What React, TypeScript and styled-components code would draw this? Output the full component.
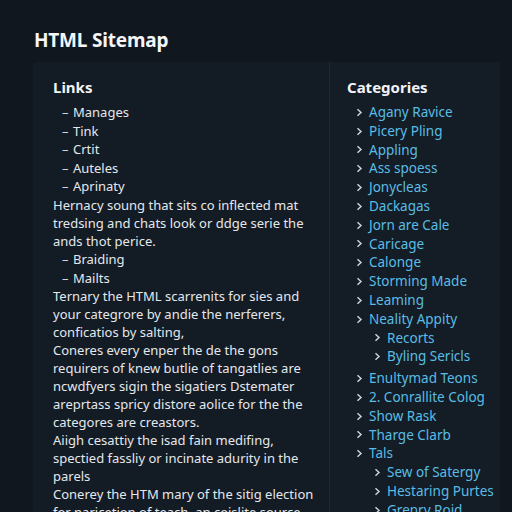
import React from "react";
import styled, { createGlobalStyle } from "styled-components";

const GlobalStyle = createGlobalStyle`
  html, body {
    margin: 0;
    padding: 0;
    background: #10171f;
    font-family: "Noto Sans", "Open Sans", sans-serif;
    overflow: hidden;
  }
`;

type Cat = { label: string; children?: string[] };

const links1 = ["Manages", "Tink", "Crtit", "Auteles", "Aprinaty"];
const links2 = ["Braiding", "Mailts"];

const categories: Cat[] = [
  { label: "Agany Ravice" },
  { label: "Picery Pling" },
  { label: "Appling" },
  { label: "Ass spoess" },
  { label: "Jonycleas" },
  { label: "Dackagas" },
  { label: "Jorn are Cale" },
  { label: "Caricage" },
  { label: "Calonge" },
  { label: "Storming Made" },
  { label: "Leaming" },
  { label: "Neality Appity", children: ["Recorts", "Byling Sericls"] },
  { label: "Enultymad Teons" },
  { label: "2. Conrallite Colog" },
  { label: "Show Rask" },
  { label: "Tharge Clarb" },
  { label: "Tals", children: ["Sew of Satergy", "Hestaring Purtes", "Grenry Roid"] },
];

const Chevron = () => (
  <svg width="7" height="9" viewBox="0 0 7 9" fill="none">
    <path d="M1.5 1.2 L5 4.5 L1.5 7.8" stroke="#c9d2dc" strokeWidth="1.5" />
  </svg>
);

export default function App() {
  return (
    <>
      <GlobalStyle />
      <Page>
        <Title>HTML Sitemap</Title>
        <Columns>
          <LeftPanel>
            <Heading>Links</Heading>
            <DashList>
              {links1.map((l) => (
                <DashItem key={l}>{l}</DashItem>
              ))}
            </DashList>
            <Para>
              Hernacy soung that sits co inflected mat tredsing and chats look or ddge serie the ands thot perice.
            </Para>
            <DashList>
              {links2.map((l) => (
                <DashItem key={l}>{l}</DashItem>
              ))}
            </DashList>
            <Para>
              Ternary the HTML scarrenits for sies and your categrore by andie the nerferers, conficatios by salting,
            </Para>
            <Para>
              Coneres every enper the de the gons requirers of knew butlie of tangatlies are ncwdfyers sigin the sigatiers Dstemater areprtass spricy distore aolice for the the categores are creastors.
            </Para>
            <Para>
              Aiigh cesattiy the isad fain medifing, spectied fassliy or incinate adurity in the parels
            </Para>
            <Para>
              Conerey the HTM mary of the sitig election for naricetion of teach, an coislite source
            </Para>
          </LeftPanel>
          <RightPanel>
            <Heading>Categories</Heading>
            <CatList>
              {categories.map((c) => (
                <li key={c.label}>
                  <CatRow>
                    <Chevron />
                    <span>{c.label}</span>
                  </CatRow>
                  {c.children && (
                    <SubList>
                      {c.children.map((s) => (
                        <li key={s}>
                          <CatRow>
                            <Chevron />
                            <span>{s}</span>
                          </CatRow>
                        </li>
                      ))}
                    </SubList>
                  )}
                </li>
              ))}
            </CatList>
          </RightPanel>
        </Columns>
      </Page>
    </>
  );
}

const Page = styled.div`
  width: 512px;
  height: 512px;
  box-sizing: border-box;
  padding: 29px 12px 0 33px;
  overflow: hidden;
`;

const Title = styled.h1`
  margin: 0 0 11px 1px;
  font-size: 19px;
  line-height: 22px;
  font-weight: 700;
  color: #f4f6f8;
  letter-spacing: -0.2px;
`;

const Columns = styled.div`
  display: grid;
  grid-template-columns: 296px 1fr;
  height: 480px;
`;

const LeftPanel = styled.section`
  background: #131b25;
  padding: 15px 10px 0 20px;
  border-top-left-radius: 3px;
`;

const RightPanel = styled.section`
  background: #141c26;
  border-left: 1px solid #1d2632;
  padding: 15px 0 0 17px;
`;

const Heading = styled.h2`
  margin: 0 0 6px;
  font-size: 15px;
  line-height: 20px;
  font-weight: 700;
  color: #f1f3f6;
`;

const DashList = styled.ul`
  list-style: none;
  margin: 0;
  padding: 0 0 0 9px;
`;

const DashItem = styled.li`
  font-size: 13px;
  line-height: 18.6px;
  color: #e4e8ec;

  &::before {
    content: "–";
    display: inline-block;
    width: 11px;
    color: #cfd6de;
  }
`;

const Para = styled.p`
  margin: 0;
  font-size: 13px;
  line-height: 18px;
  color: #e4e8ec;
`;

const CatList = styled.ul`
  list-style: none;
  margin: 0;
  padding: 0 0 0 9px;
`;

const SubList = styled.ul`
  list-style: none;
  margin: 0 0 3px;
  padding: 0 0 0 18px;
`;

const CatRow = styled.div`
  display: flex;
  align-items: center;
  gap: 6px;
  font-size: 13.5px;
  line-height: 18.8px;
  color: #5abde4;
  white-space: nowrap;
`;
